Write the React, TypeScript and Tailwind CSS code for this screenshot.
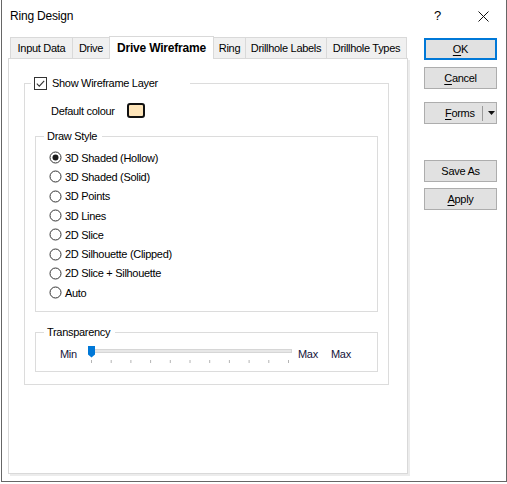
import React from 'react';

const tabs = [
    { label: 'Input Data', w: 'w-[62px]', cls: 'border-l' },
    { label: 'Drive', w: 'w-[37px]', cls: 'border-l' },
    { label: 'Drive Wireframe', w: 'w-[105px]', cls: 'border-x', active: true },
    { label: 'Ring', w: 'w-[31px]', cls: '' },
    { label: 'Drillhole Labels', w: 'w-[81px]', cls: 'border-l' },
    { label: 'Drillhole Types', w: 'w-[81px]', cls: 'border-x' },
];

const drawStyles = [
    '3D Shaded (Hollow)',
    '3D Shaded (Solid)',
    '3D Points',
    '3D Lines',
    '2D Slice',
    '2D Silhouette (Clipped)',
    '2D Slice + Silhouette',
    'Auto',
];

function Radio({ checked }: { checked?: boolean }) {
    return (
        <svg width="13" height="13" viewBox="0 0 13 13" className="shrink-0">
            <circle cx="6.5" cy="6.5" r="5.5" fill="#fff" stroke="#333" strokeWidth="1" />
            {checked && <circle cx="6.5" cy="6.5" r="3" fill="#1a1a1a" />}
        </svg>
    );
}

function Button({ children, primary, className = '' }: { children: React.ReactNode; primary?: boolean; className?: string }) {
    return (
        <div
            className={`h-[22px] w-[73px] flex items-center justify-center bg-[#e1e1e1] ${
                primary ? 'border-2 border-[#0078d7]' : 'border border-[#adadad]'
            } ${className}`}
        >
            {children}
        </div>
    );
}

function Slider() {
    const ticks = Array.from({ length: 11 }, (_, i) => 4.5 + i * 19.7);
    return (
        <svg width="206" height="20" viewBox="0 0 206 20" className="shrink-0">
            <rect x="4.5" y="4.5" width="200" height="3" fill="#e7e7e7" stroke="#d6d6d6" />
            {ticks.map((x) => (
                <line key={x} x1={x} y1="15" x2={x} y2="18" stroke="#b4b4b4" strokeWidth="1" />
            ))}
            <polygon points="1,1 8,1 8,9.5 4.5,12.5 1,9.5" fill="#0078d7" />
        </svg>
    );
}

export default function App() {
    return (
        <div className="w-[507px] h-[484px] bg-white overflow-hidden font-['Liberation_Sans',Arial,sans-serif] text-[11px] leading-[14px] tracking-[-0.3px] text-black">
            <div className="ml-px w-[506px] h-[482px] border-x border-b border-[#666666] flex flex-col">
                {/* Title bar */}
                <div className="h-[32px] flex items-center pl-[8px] shrink-0">
                    <span className="text-[12px] tracking-[-0.2px]">Ring Design</span>
                    <span className="ml-auto text-[13px] mr-[37px]">?</span>
                    <svg width="11" height="11" viewBox="0 0 11 11" className="mr-[17px]">
                        <path d="M0.5 0.5 L10.5 10.5 M10.5 0.5 L0.5 10.5" stroke="#111" strokeWidth="1" />
                    </svg>
                </div>

                <div className="flex">
                    {/* Tabs + page */}
                    <div className="ml-[6px] w-[400px] flex flex-col">
                        <div className="h-[26px] flex items-end pl-[2px]">
                            {tabs.map((t) => (
                                <div
                                    key={t.label}
                                    className={`${t.w} ${t.cls} border-t border-[#d9d9d9] flex items-center justify-center ${
                                        t.active
                                            ? 'h-[23px] -mb-px bg-white relative z-10 font-bold text-[12px] tracking-[-0.2px] pb-px'
                                            : 'h-[21px] bg-[#f0f0f0]'
                                    }`}
                                >
                                    {t.label}
                                </div>
                            ))}
                        </div>

                        <div className="h-[416px] border border-[#d9d9d9] shadow-[2px_2px_0_#ececec] bg-white">
                            {/* Show Wireframe Layer group */}
                            <fieldset className="mt-[17px] ml-[15px] w-[365px] border border-[#dcdcdc] pb-[12px]">
                                <legend className="ml-[6px] w-[159px] h-[14px] px-[3px] flex items-center">
                                    <svg width="13" height="13" viewBox="0 0 13 13" className="shrink-0">
                                        <rect x="0.5" y="0.5" width="12" height="12" fill="#fff" stroke="#333" />
                                        <path d="M2.8 6.6 L5.3 9.1 L10.2 3.8" fill="none" stroke="#333" strokeWidth="1.1" />
                                    </svg>
                                    <span className="ml-[5px]">Show Wireframe Layer</span>
                                </legend>

                                <div className="mt-[13px] pl-[26px] h-[15px] flex items-center">
                                    <span className="w-[76px]">Default colour</span>
                                    <div className="w-[18px] h-[15px] rounded-[3px] border-2 border-[#111] bg-[#fde4b9]" />
                                </div>

                                {/* Draw Style */}
                                <fieldset className="mt-[11px] ml-[10px] w-[343px] border border-[#dcdcdc]">
                                    <legend className="ml-[8px] px-[3px] pr-[5px] h-[14px]">Draw Style</legend>
                                    <div className="flex flex-col pt-[5px] pb-[9px] pl-[13px]">
                                        {drawStyles.map((s, i) => (
                                            <div key={s} className="h-[19.3px] flex items-center">
                                                <Radio checked={i === 0} />
                                                <span className="ml-[3px]">{s}</span>
                                            </div>
                                        ))}
                                    </div>
                                </fieldset>

                                {/* Transparency */}
                                <fieldset className="mt-[13px] ml-[10px] w-[343px] border border-[#dcdcdc]">
                                    <legend className="ml-[8px] px-[3px] pr-[5px] h-[14px]">Transparency</legend>
                                    <div className="flex items-center h-[20px] mt-[6px] mb-[6px] pl-[24px]">
                                        <span className="w-[27px] text-[#14143a] -mt-[2px]">Min</span>
                                        <Slider />
                                        <span className="ml-[5px] w-[33px] text-[#14143a] -mt-[2px]">Max</span>
                                        <span className="text-[#14143a] -mt-[2px]">Max</span>
                                    </div>
                                </fieldset>
                            </fieldset>
                        </div>
                    </div>

                    {/* Buttons */}
                    <div className="ml-[16px] w-[73px] flex flex-col pt-[6px]">
                        <Button primary>
                            <span className="underline underline-offset-2">O</span>K
                        </Button>
                        <Button className="mt-[7px]">
                            <span className="underline underline-offset-2">C</span>ancel
                        </Button>
                        <Button className="mt-[13px] !justify-start">
                            <span className="ml-[20px]">
                                <span className="underline underline-offset-2">F</span>orms
                            </span>
                            <span className="ml-[7px] w-px h-[15px] bg-[#9a9a9a]" />
                            <svg width="7" height="4" viewBox="0 0 7 4" className="ml-[5px]">
                                <polygon points="0,0 7,0 3.5,4" fill="#111" />
                            </svg>
                        </Button>
                        <Button className="mt-[36px]">Save As</Button>
                        <Button className="mt-[6px]">
                            <span className="underline underline-offset-2">A</span>pply
                        </Button>
                    </div>
                </div>
            </div>
        </div>
    );
}
